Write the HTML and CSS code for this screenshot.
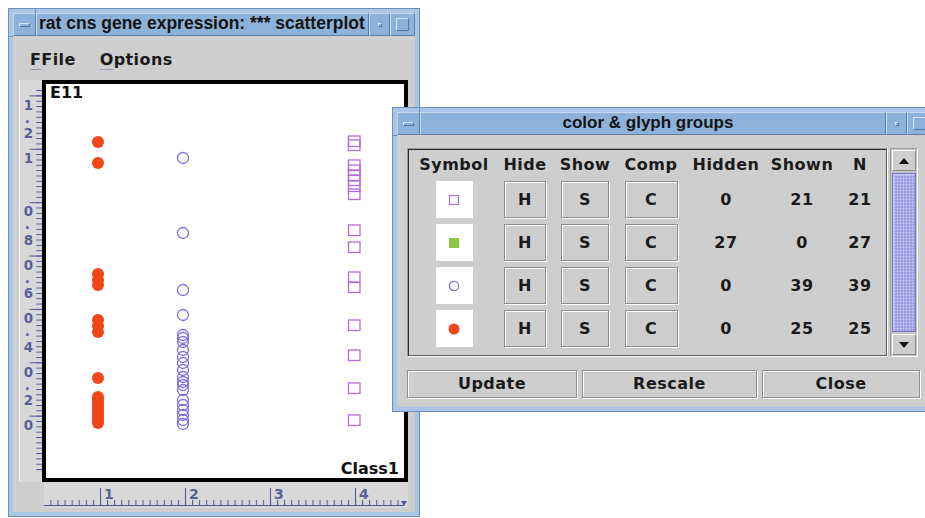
FILE: index.html
```html
<!DOCTYPE html>
<html lang="en">
<head>
<meta charset="utf-8">
<title>rat cns gene expression</title>
<link rel="stylesheet" href="styles.css">
</head>
<body>

<div class="win win-main">
  <div class="titlebar">
    <div class="tb-btn tb-menu"><span class="g-bar"></span></div>
    <div class="tb-title">rat cns gene expression: *** scatterplot</div>
    <div class="tb-btn tb-min"><span class="g-dot"></span></div>
    <div class="tb-btn tb-max"><span class="g-sq"></span></div>
  </div>
  <div class="client">
    <div class="menubar">
      <span class="menu"><span class="mn">F</span>File</span>
      <span class="menu"><span class="mn">O</span>ptions</span>
    </div>
    <div class="plotarea">
      <svg class="yruler" width="23" height="402" viewBox="0 0 23 402">
        <defs>
          <pattern id="ytick" patternUnits="userSpaceOnUse" x="18" y="7" width="5" height="5.58">
            <rect x="0" y="0" width="5" height="1" fill="#4f5394"/>
          </pattern>
        </defs>
        <rect x="17" y="0" width="6" height="402" fill="url(#ytick)"/>
        <path d="M10 7.5H23M10 63.3H23M10 119.1H23M10 174.9H23M10 230.7H23M10 286.5H23M10 342.3H23" stroke="#4f5394" stroke-width="1"/>
        <g class="rtxt">
          <text x="4" y="22">1</text><text x="5" y="36">.</text><text x="4" y="52">2</text>
          <text x="4" y="78">1</text>
          <text x="4" y="133">0</text><text x="5" y="147">.</text><text x="4" y="163">8</text>
          <text x="4" y="189">0</text><text x="5" y="203">.</text><text x="4" y="219">6</text>
          <text x="4" y="245">0</text><text x="5" y="259">.</text><text x="4" y="275">4</text>
          <text x="4" y="301">0</text><text x="5" y="315">.</text><text x="4" y="331">2</text>
          <text x="4" y="357">0</text>
        </g>
      </svg>
      <div class="plot">
        <svg class="points" width="358" height="394" viewBox="0 0 358 394">
          <g fill="#f0461a">
            <circle cx="52" cy="58" r="6"/><circle cx="52" cy="79" r="6"/>
            <circle cx="52" cy="190" r="6"/><circle cx="52" cy="196" r="6"/><circle cx="52" cy="201" r="6"/>
            <circle cx="52" cy="236" r="6"/><circle cx="52" cy="242" r="6"/><circle cx="52" cy="248" r="6"/>
            <circle cx="52" cy="294" r="6"/>
            <circle cx="52" cy="313" r="6"/><circle cx="52" cy="316" r="6"/><circle cx="52" cy="319" r="6"/>
            <circle cx="52" cy="322" r="6"/><circle cx="52" cy="325" r="6"/><circle cx="52" cy="328" r="6"/>
            <circle cx="52" cy="331" r="6"/><circle cx="52" cy="334" r="6"/><circle cx="52" cy="337" r="6"/>
            <circle cx="52" cy="339" r="6"/>
          </g>
          <g fill="none" stroke="#7d6fe3" stroke-width="1.3">
            <circle cx="137" cy="74" r="5.5"/><circle cx="137" cy="149" r="5.5"/>
            <circle cx="137" cy="206" r="5.5"/><circle cx="137" cy="231" r="5.5"/>
            <circle cx="137" cy="251" r="5.5"/><circle cx="137" cy="254" r="5.5"/><circle cx="137" cy="258" r="5.5"/>
            <circle cx="137" cy="266" r="5.5"/><circle cx="137" cy="273" r="5.5"/><circle cx="137" cy="279" r="5.5"/>
            <circle cx="137" cy="286" r="5.5"/><circle cx="137" cy="293" r="5.5"/><circle cx="137" cy="298" r="5.5"/>
            <circle cx="137" cy="301" r="5.5"/><circle cx="137" cy="306" r="5.5"/><circle cx="137" cy="316" r="5.5"/>
            <circle cx="137" cy="321" r="5.5"/><circle cx="137" cy="326" r="5.5"/><circle cx="137" cy="331" r="5.5"/>
            <circle cx="137" cy="336" r="5.5"/><circle cx="137" cy="340" r="5.5"/>
          </g>
          <g fill="none" stroke="#b56bd6" stroke-width="1.3">
            <rect x="302.5" y="52" width="11.5" height="10.5"/><rect x="302.5" y="56" width="11.5" height="10.5"/>
            <rect x="302.5" y="76" width="11.5" height="10.5"/><rect x="302.5" y="81" width="11.5" height="10.5"/>
            <rect x="302.5" y="86" width="11.5" height="10.5"/><rect x="302.5" y="91" width="11.5" height="10.5"/>
            <rect x="302.5" y="97" width="11.5" height="10.5"/><rect x="302.5" y="105" width="11.5" height="10.5"/>
            <rect x="302.5" y="141" width="11.5" height="10.5"/><rect x="302.5" y="158" width="11.5" height="10.5"/>
            <rect x="302.5" y="188" width="11.5" height="10.5"/><rect x="302.5" y="198" width="11.5" height="10.5"/>
            <rect x="302.5" y="236" width="11.5" height="10.5"/><rect x="302.5" y="266" width="11.5" height="10.5"/>
            <rect x="302.5" y="299" width="11.5" height="10.5"/><rect x="302.5" y="331" width="11.5" height="10.5"/>
          </g>
        </svg>
        <span class="axis-label">E11</span>
        <span class="axis-label axis-x">Class1</span>
      </div>
      <svg class="xruler" width="364" height="26" viewBox="0 0 364 26">
        <defs>
          <pattern id="xtick" patternUnits="userSpaceOnUse" x="56" y="0" width="7.083" height="26">
            <rect x="0" y="18" width="1" height="5" fill="#4f5394"/>
          </pattern>
        </defs>
        <rect x="3" y="0" width="356" height="26" fill="url(#xtick)"/>
        <path d="M0 23.5H360M56.5 6V23M141.5 6V23M226.5 6V23M311.5 6V23" stroke="#4f5394" stroke-width="1"/>
        <path d="M357 19H363L360 24Z" fill="#4f5394"/>
        <g class="rtxt">
          <text x="60" y="17">1</text><text x="145" y="17">2</text>
          <text x="230" y="17">3</text><text x="315" y="17">4</text>
        </g>
      </svg>
    </div>
  </div>
</div>

<div class="win win-dialog">
  <div class="titlebar">
    <div class="tb-btn tb-menu"><span class="g-bar"></span></div>
    <div class="tb-title tb-center">color &amp; glyph groups</div>
    <div class="tb-btn tb-min"><span class="g-dot"></span></div>
    <div class="tb-btn tb-max"><span class="g-sq"></span></div>
  </div>
  <div class="dlg-client">
    <div class="dlg-top">
      <div class="groups">
        <div class="hd">Symbol</div><div class="hd">Hide</div><div class="hd">Show</div><div class="hd">Comp</div>
        <div class="hd">Hidden</div><div class="hd">Shown</div><div class="hd">N</div>

        <div class="cell"><div class="sym"><svg width="12" height="12" viewBox="0 0 12 12"><rect x="1.5" y="1.5" width="9" height="9" fill="none" stroke="#b56bd6" stroke-width="1.2"/></svg></div></div>
        <div class="cell"><div class="btn w-h">H</div></div>
        <div class="cell"><div class="btn w-s">S</div></div>
        <div class="cell"><div class="btn w-c">C</div></div>
        <div class="cell">0</div><div class="cell">21</div><div class="cell">21</div>

        <div class="cell"><div class="sym"><svg width="12" height="12" viewBox="0 0 12 12"><rect x="1" y="1" width="10" height="10" fill="#8cc63e"/></svg></div></div>
        <div class="cell"><div class="btn w-h">H</div></div>
        <div class="cell"><div class="btn w-s">S</div></div>
        <div class="cell"><div class="btn w-c">C</div></div>
        <div class="cell">27</div><div class="cell">0</div><div class="cell">27</div>

        <div class="cell"><div class="sym"><svg width="12" height="12" viewBox="0 0 12 12"><circle cx="6" cy="6" r="4.6" fill="none" stroke="#7d6fe3" stroke-width="1.2"/></svg></div></div>
        <div class="cell"><div class="btn w-h">H</div></div>
        <div class="cell"><div class="btn w-s">S</div></div>
        <div class="cell"><div class="btn w-c">C</div></div>
        <div class="cell">0</div><div class="cell">39</div><div class="cell">39</div>

        <div class="cell"><div class="sym"><svg width="12" height="12" viewBox="0 0 12 12"><circle cx="6" cy="6" r="5.5" fill="#f0461a"/></svg></div></div>
        <div class="cell"><div class="btn w-h">H</div></div>
        <div class="cell"><div class="btn w-s">S</div></div>
        <div class="cell"><div class="btn w-c">C</div></div>
        <div class="cell">0</div><div class="cell">25</div><div class="cell">25</div>
      </div>
      <div class="sbar">
        <div class="sb-btn"><span class="arr-up"></span></div>
        <div class="sb-thumb"></div>
        <div class="sb-btn"><span class="arr-down"></span></div>
      </div>
    </div>
    <div class="dlg-actions">
      <div class="btn act-update">Update</div>
      <div class="btn act-rescale">Rescale</div>
      <div class="btn act-close">Close</div>
    </div>
  </div>
</div>

</body>
</html>
```
FILE: styles.css
```css
* { box-sizing: border-box; }

html, body { margin: 0; padding: 0; }

body {
  width: 925px;
  height: 518px;
  overflow: hidden;
  position: relative;
  background: #ffffff;
  font-family: "DejaVu Sans", sans-serif;
  color: #1a1a1a;
}

/* window manager frame */
.win {
  position: absolute;
  display: flex;
  flex-direction: column;
  background: #a9c6e6;
  border: 1px solid #6d90ba;
  padding: 4px;
}

/* resize-handle notches on the frame corners */
.win::before,
.win::after {
  content: "";
  position: absolute;
  background: #6d90ba;
}
.win::before { left: 26px; top: -1px; width: 1px; height: 5px; }
.win::after { left: -1px; top: 27px; width: 5px; height: 1px; }

.win-main { left: 8px; top: 8px; width: 412px; height: 509px; }
.win-dialog { left: 392px; top: 107px; width: 545px; height: 305px; z-index: 2; }

.titlebar {
  flex: none;
  display: flex;
  height: 23px;
  background: #8db2da;
}

.tb-btn, .tb-title {
  border: 1px solid;
  border-color: #c6dbf1 #5a7fa9 #5a7fa9 #c6dbf1;
}

.tb-btn {
  flex: none;
  display: flex;
  align-items: center;
  justify-content: center;
}

.tb-menu { width: 23px; }
.tb-min { width: 21px; }
.tb-max { width: 25px; }

.tb-title {
  flex: 1;
  min-width: 0;
  overflow: hidden;
  white-space: nowrap;
  padding-left: 2px;
  font: bold 17.5px/19px "Liberation Sans", Arial, sans-serif;
  color: #141414;
}

.tb-center { text-align: center; padding-right: 12px; font-size: 17px; }

.g-bar, .g-dot, .g-sq {
  display: block;
  border: 1px solid;
  border-color: #d3e4f5 #54779f #54779f #d3e4f5;
}
.g-bar { width: 11px; height: 4px; }
.g-dot { width: 4px; height: 4px; }
.g-sq { width: 13px; height: 13px; }

/* scatterplot window */
.client {
  flex: 1;
  background: #cecece;
  display: flex;
  flex-direction: column;
}

.menubar {
  height: 44px;
  padding: 4px 0 0 17px;
  display: flex;
  align-items: center;
  gap: 24px;
  font: bold 16px/18px "DejaVu Sans", sans-serif;
  letter-spacing: 0.4px;
}

.mn {
  text-decoration: underline;
  text-decoration-color: #8d9db8;
  text-decoration-thickness: 1px;
  text-underline-offset: 4px;
}

.plotarea {
  display: grid;
  grid-template-columns: 23px 366px;
  grid-template-rows: 402px 26px;
  margin-left: 6px;
}

.yruler {
  display: block;
  background: #d8d8d8;
  border-left: 1px solid #f2f2f2;
}

.rtxt {
  font: bold 14px "DejaVu Sans", sans-serif;
  fill: #5a5e9e;
}

.plot {
  position: relative;
  background: #ffffff;
  border: 4px solid #000000;
  display: flex;
  flex-direction: column;
  justify-content: space-between;
  align-items: flex-start;
  padding: 0 5px 0 4px;
  font: bold 16px/18px "DejaVu Sans", sans-serif;
  color: #111;
}

.points { position: absolute; left: 0; top: 0; }

.axis-label { position: relative; }
.axis-x { align-self: flex-end; }

.xruler {
  display: block;
  grid-column: 2;
  margin-left: 2px;
  background: #d8d8d8;
}

/* colour & glyph groups dialog */
.dlg-client {
  flex: 1;
  background: #cecece;
  padding: 13px 0 9px 10px;
  display: flex;
  flex-direction: column;
}

.dlg-top {
  display: flex;
  gap: 2px;
  height: 209px;
}

.groups {
  width: 481px;
  border: 1px solid;
  border-color: #9a9a9a #ffffff #ffffff #9a9a9a;
  box-shadow: inset 1px 1px 0 #2e2e2e, inset -1px -1px 0 #5e5e5e;
  display: grid;
  grid-template-columns: 88px 54px 66px 66px 84px 68px 48px;
  grid-template-rows: 25px repeat(4, 37px);
  row-gap: 6px;
  align-content: start;
  padding: 1px 0 0 2px;
  font: bold 16px/18px "DejaVu Sans", sans-serif;
  letter-spacing: 0.5px;
}

.hd { text-align: center; padding-top: 6px; }

.cell {
  display: flex;
  align-items: center;
  justify-content: center;
}

.sym {
  width: 37px;
  height: 37px;
  background: #ffffff;
  display: flex;
  align-items: center;
  justify-content: center;
}

.btn {
  height: 37px;
  background: #cecece;
  border: 1px solid #8f8f8f;
  box-shadow: inset 1px 1px 0 #ffffff, 1px 1px 0 #ffffff;
  display: flex;
  align-items: center;
  justify-content: center;
  font: bold 16px/18px "DejaVu Sans", sans-serif;
  letter-spacing: 0.5px;
}

.w-h { width: 42px; }
.w-s { width: 48px; }
.w-c { width: 53px; }

.sbar {
  width: 28px;
  border: 1px solid;
  border-color: #9a9a9a #ffffff #ffffff #9a9a9a;
  background: #c6c6c6;
  padding: 1px;
  display: flex;
  flex-direction: column;
  gap: 2px;
}

.sb-btn {
  height: 21px;
  flex: none;
  background: #cecece;
  border: 1px solid;
  border-color: #ffffff #8a8a8a #8a8a8a #ffffff;
  display: flex;
  align-items: center;
  justify-content: center;
}

.arr-up, .arr-down {
  width: 0;
  height: 0;
  border-left: 5px solid transparent;
  border-right: 5px solid transparent;
}
.arr-up { border-bottom: 6px solid #111; }
.arr-down { border-top: 6px solid #111; }

.sb-thumb {
  flex: 1;
  background-color: #9d9de2;
  background-image: radial-gradient(circle, #d4d4f6 0.7px, transparent 1.1px);
  background-size: 3px 3px;
  border: 1px solid #7373c6;
  box-shadow: inset 1px 1px 0 #c8c8f3;
}

.dlg-actions {
  display: flex;
  gap: 5px;
  margin-top: 13px;
}

.dlg-actions .btn { height: 28px; }
.act-update { width: 170px; }
.act-rescale { width: 175px; }
.act-close { width: 158px; }
```
